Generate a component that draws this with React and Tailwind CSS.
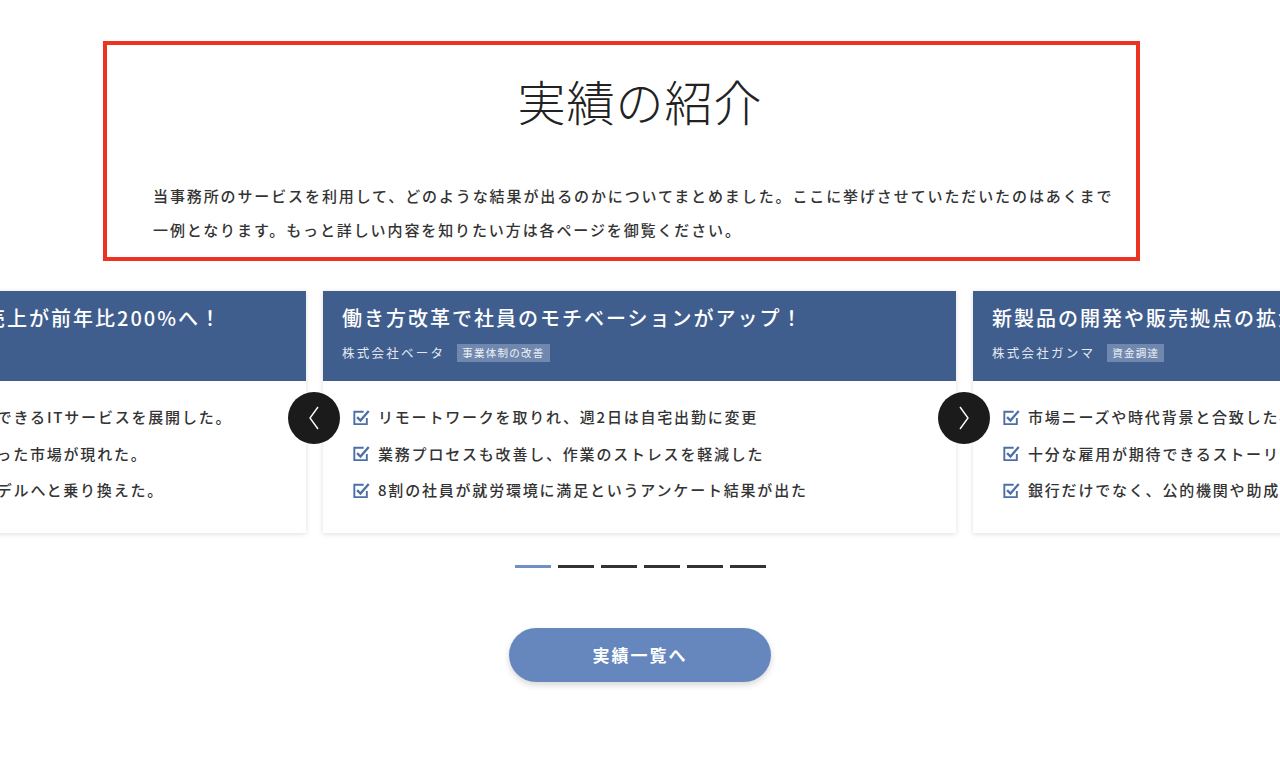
import React from "react";

const font = { fontFamily: '"Noto Sans CJK JP", "Noto Sans", sans-serif' };

function CheckIcon() {
  return (
    <svg width="18" height="17" viewBox="0 0 17 16" className="shrink-0">
      <path d="M11 2.5H2.2V14.3H14V8.5" fill="none" stroke="#4d6fa8" strokeWidth="1.8" />
      <path d="M4.8 7.6L8 10.8L15.8 1.8" fill="none" stroke="#4d6fa8" strokeWidth="2.2" />
    </svg>
  );
}

const cards = [
  {
    title: "新規事業の立ち上げに成功し、売上が前年比200%へ！",
    company: "株式会社アルファ",
    tag: "新規事業",
    items: [
      "中小企業でも簡単に業務の効率化ができるITサービスを展開した。",
      "その結果、これまで想定していなかった市場が現れた。",
      "これまでの売切り型からサブスクモデルへと乗り換えた。",
    ],
  },
  {
    title: "働き方改革で社員のモチベーションがアップ！",
    company: "株式会社ベータ",
    tag: "事業体制の改善",
    items: [
      "リモートワークを取りれ、週2日は自宅出勤に変更",
      "業務プロセスも改善し、作業のストレスを軽減した",
      "8割の社員が就労環境に満足というアンケート結果が出た",
    ],
  },
  {
    title: "新製品の開発や販売拠点の拡大に成功！",
    company: "株式会社ガンマ",
    tag: "資金調達",
    items: [
      "市場ニーズや時代背景と合致した事業計画を作成",
      "十分な雇用が期待できるストーリーを提示",
      "銀行だけでなく、公的機関や助成金も活用した",
    ],
  },
];

function Card({ c, first }) {
  return (
    <div className="w-[633px] shrink-0 bg-white shadow-[0_1px_5px_rgba(0,0,0,0.13)]">
      <div className={"h-[90px] bg-[#3f5e8d] pt-[13px] whitespace-nowrap overflow-hidden " + (first ? "pl-[4px]" : "pl-[19px]")}>
        <div className="text-[20px] leading-[28px] font-medium tracking-[0.1em] text-white">{c.title}</div>
        <div className="mt-[12px] flex items-center gap-[12px]">
          <span className="text-[12.5px] leading-[18px] tracking-[0.18em] text-[#e3e8f1]">{c.company}</span>
          <span className="bg-[#7088ae] px-[5px] text-[10.5px] leading-[18px] tracking-[0.12em] text-[#eef2f8]">{c.tag}</span>
        </div>
      </div>
      <div className="pl-[29px] pt-[18px] pb-[24px]">
        {c.items.map((t, i) => (
          <div key={i} className="flex items-center gap-[8px] h-[36.5px] whitespace-nowrap">
            <CheckIcon />
            <span className="text-[15px] font-medium tracking-[0.12em] text-[#333]">{t}</span>
          </div>
        ))}
      </div>
    </div>
  );
}

function Arrow({ dir, className }) {
  return (
    <div className={"absolute top-[392px] w-[52px] h-[52px] rounded-full bg-[#1b1b1b] flex items-center justify-center " + className}>
      <svg width="14" height="26" viewBox="0 0 14 26">
        {dir === "left" ? (
          <polyline points="11,2 3,13 11,24" fill="none" stroke="#fff" strokeWidth="1.4" />
        ) : (
          <polyline points="3,2 11,13 3,24" fill="none" stroke="#fff" strokeWidth="1.4" />
        )}
      </svg>
    </div>
  );
}

export default function App() {
  return (
    <div className="relative w-[1280px] h-[774px] overflow-hidden bg-white" style={font}>
      <div className="pt-[71px] flex flex-col items-center">
        <h1 className="text-[48px] leading-[58px] font-light tracking-[0.02em] text-[#222]">実績の紹介</h1>
        <p className="mt-[50px] w-[974px] text-[15px] leading-[34px] font-medium tracking-[0.126em] text-[#333] whitespace-nowrap">
          当事務所のサービスを利用して、どのような結果が出るのかについてまとめました。ここに挙げさせていただいたのはあくまで
          <br />
          一例となります。もっと詳しい内容を知りたい方は各ページを御覧ください。
        </p>
      </div>

      <div className="mt-[44px] flex gap-[17px] ml-[-327px]">
        {cards.map((c, i) => (
          <Card key={i} c={c} first={i === 0} />
        ))}
      </div>

      <div className="mt-[32px] flex justify-center gap-[7px]">
        {[0, 1, 2, 3, 4, 5].map((i) => (
          <div key={i} className={"w-[36px] h-[3px] " + (i === 0 ? "bg-[#6e90c6]" : "bg-[#333]")} />
        ))}
      </div>

      <div className="mt-[60px] flex justify-center">
        <button className="w-[262px] h-[54px] rounded-full bg-[#6587bd] text-white text-[17px] font-bold tracking-[0.12em] shadow-[0_3px_6px_rgba(0,0,0,0.16)]">
          実績一覧へ
        </button>
      </div>

      <Arrow dir="left" className="left-[288px]" />
      <Arrow dir="right" className="left-[938px]" />

      <div className="absolute left-[103px] top-[41px] w-[1037px] h-[220px] border-[4px] border-[#ec3322] pointer-events-none" />
    </div>
  );
}
